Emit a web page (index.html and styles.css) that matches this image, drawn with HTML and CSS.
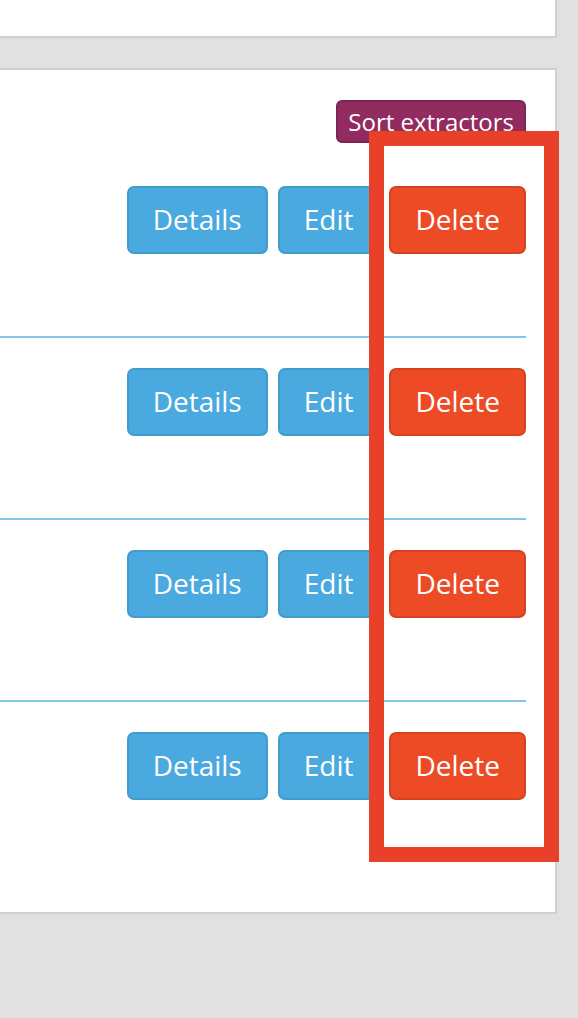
FILE: index.html
```html
<!DOCTYPE html>
<html>
<head>
<meta charset="utf-8">
<link rel="stylesheet" href="styles.css">
</head>
<body>
<div class="page">
  <div class="panel panel-top"></div>
  <div class="panel panel-main">
    <div class="toolbar">
      <button class="btn btn-xs btn-sort">Sort extractors</button>
    </div>
    <div class="row">
      <div class="actions">
        <button class="btn btn-info">Details</button>
        <button class="btn btn-info">Edit</button>
        <button class="btn btn-danger">Delete</button>
      </div>
    </div>
    <div class="row">
      <div class="actions">
        <button class="btn btn-info">Details</button>
        <button class="btn btn-info">Edit</button>
        <button class="btn btn-danger">Delete</button>
      </div>
    </div>
    <div class="row">
      <div class="actions">
        <button class="btn btn-info">Details</button>
        <button class="btn btn-info">Edit</button>
        <button class="btn btn-danger">Delete</button>
      </div>
    </div>
    <div class="row">
      <div class="actions">
        <button class="btn btn-info">Details</button>
        <button class="btn btn-info">Edit</button>
        <button class="btn btn-danger">Delete</button>
      </div>
    </div>
  </div>
  <div class="highlight"></div>
</div>
</body>
</html>
```

FILE: styles.css
```css
html, body {
  margin: 0;
  padding: 0;
  background: #e1e1e1;
  font-family: "Open Sans", "Liberation Sans", sans-serif;
}

.page {
  position: relative;
  width: 578px;
  height: 1018px;
  overflow: hidden;
}

.panel {
  background: #fff;
  border: 2px solid #d0d0d0;
  border-left: none;
  margin-right: 21px;
  box-sizing: border-box;
}

.panel-top {
  height: 38px;
  border-top: none;
  margin-bottom: 30px;
}

.panel-main {
  padding: 30px 29px 30px 0;
}

.toolbar {
  display: flex;
  justify-content: flex-end;
  margin-bottom: 13px;
}

.row {
  padding: 30px 0 82px;
}

.row + .row {
  border-top: 2px solid #82c6ec;
}

.actions {
  display: flex;
  justify-content: flex-end;
  gap: 10px;
}

.btn {
  font-family: "Open Sans", "Liberation Sans", sans-serif;
  font-size: 28px;
  line-height: 40px;
  padding: 11px 24px 13px;
  border: 2px solid transparent;
  border-radius: 7px;
  color: #fff;
  margin: 0;
  cursor: pointer;
}

.btn-xs {
  font-size: 24px;
  line-height: 35px;
  padding: 2px 10px;
  border-radius: 6px;
}

.btn-sort {
  background: #922b5f;
  border-color: #7e2451;
}

.btn-info {
  background: #4aa9de;
  border-color: #3f9bd0;
}

.btn-danger {
  background: #ec4b26;
  border-color: #d6411f;
}

.highlight {
  position: absolute;
  left: 369px;
  top: 131px;
  width: 190px;
  height: 731px;
  box-sizing: border-box;
  border: 15px solid #e9402a;
}
```
